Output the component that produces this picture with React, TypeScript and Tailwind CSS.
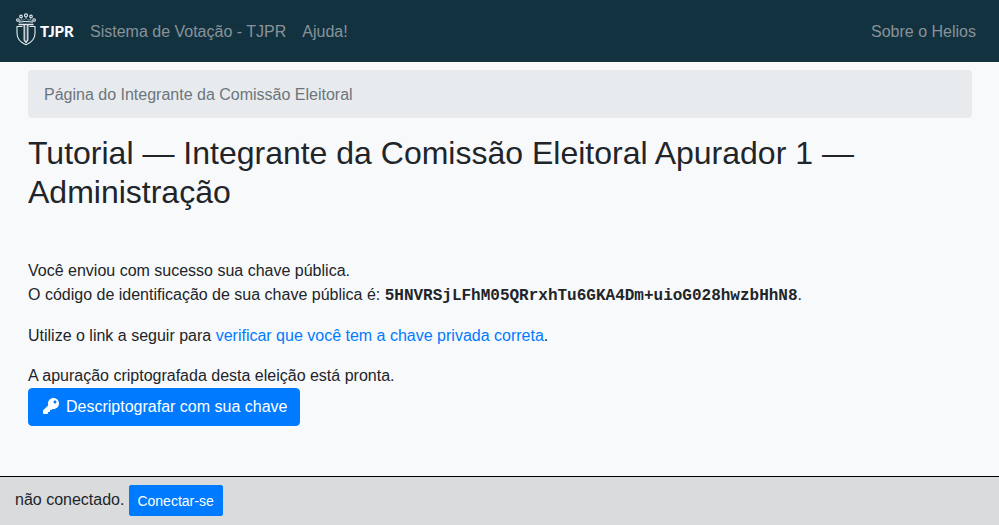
import { FaKey } from "react-icons/fa";

function Crest() {
  return (
    <svg width="22" height="33" viewBox="0 0 22 33" fill="none" stroke="#e4eaec" strokeWidth="1.1" aria-hidden="true">
      <circle cx="10" cy="2.400" r="1.500" />
      <circle cx="5" cy="3.400" r="1.300" />
      <circle cx="15" cy="3.400" r="1.300" />
      <circle cx="1.900" cy="7" r="1.300" />
      <circle cx="18.100" cy="7" r="1.300" />
      <path d="M2.800 8C4.500 8.600 5.500 7.800 5.400 5M17.200 8C15.500 8.600 14.500 7.800 14.600 5M5.600 6.800C7.600 7.600 9.600 6.400 10 4.200C10.400 6.400 12.400 7.600 14.400 6.800" strokeWidth="0.700" opacity="0.700" />
      <path d="M3 9.200Q10 7.800 17 9.200" strokeWidth="1.100" />
      <path d="M2.500 11.500H17.500" strokeWidth="1.500" />
      <path d="M6.500 13.500H1V20C1 25.500 4.500 29.500 10 31.700C15.500 29.500 19 25.500 19 20V13.500H13.500" />
      <path d="M8.200 12V27L10 29.500L11.800 27V12" strokeWidth="1.300" />
      <path d="M10 13V27" strokeWidth="0.800" opacity="0.600" />
    </svg>
  );
}

export default function App() {
  return (
    <div className="flex min-h-screen flex-col bg-[#f8f9fb] font-['Liberation_Sans',Arial,sans-serif] text-base text-[#212529]">
      <nav className="flex items-center bg-[#133240] px-4 py-2 text-[#899299]">
        <a href="#" className="mr-4 flex h-[46px] w-[58px] items-center text-white">
          <span className="-mt-1 flex shrink-0"><Crest /></span>
          <span className="ml-0.5 font-['Lato',sans-serif] text-[15px] font-black">TJPR</span>
        </a>
        <a href="#" className="mr-4 pt-0.5">Sistema de Votação - TJPR</a>
        <a href="#" className="pt-0.5">Ajuda!</a>
        <a href="#" className="mr-[7px] ml-auto pt-0.5">Sobre o Helios</a>
      </nav>

      <main className="grow pt-2 pr-[27px] pl-7">
        <nav aria-label="breadcrumb" className="mb-4 rounded bg-[#e8ebed] px-4 pt-[13px] pb-[11px] text-[#6c757d]">
          Página do Integrante da Comissão Eleitoral
        </nav>
        <h2 className="mb-[47px] text-[32px] leading-[39px]">
          Tutorial — Integrante da Comissão Eleitoral Apurador 1 — Administração
        </h2>
        <p className="mb-4">
          Você enviou com sucesso sua chave pública.
          <br />
          O código de identificação de sua chave pública é:{" "}
          <b className="font-['Liberation_Mono',monospace]">5HNVRSjLFhM05QRrxhTu6GKA4Dm+uioG028hwzbHhN8</b>.
        </p>
        <p className="mb-4">
          Utilize o link a seguir para{" "}
          <a href="#" className="text-[#007bff]">verificar que você tem a chave privada correta</a>.
        </p>
        <p>A apuração criptografada desta eleição está pronta.</p>
        <button type="button" className="flex items-center gap-[7px] rounded border border-[#007bff] bg-[#007bff] px-3 py-1.5 text-white">
          <FaKey className="-mt-0.5 ml-0.5" size={16} />
          Descriptografar com sua chave
        </button>
      </main>

      <footer className="flex items-start border-t border-black bg-[#dadbdd] px-[15px] pt-2 pb-[9px]">
        <span className="mr-[5px] pt-[3px]">não conectado.</span>
        <button type="button" className="rounded-xs border border-[#007bff] bg-[#007bff] pt-[5px] pr-2 pb-[3px] pl-[7px] text-sm leading-[21px] text-white">
          Conectar-se
        </button>
      </footer>
    </div>
  );
}
